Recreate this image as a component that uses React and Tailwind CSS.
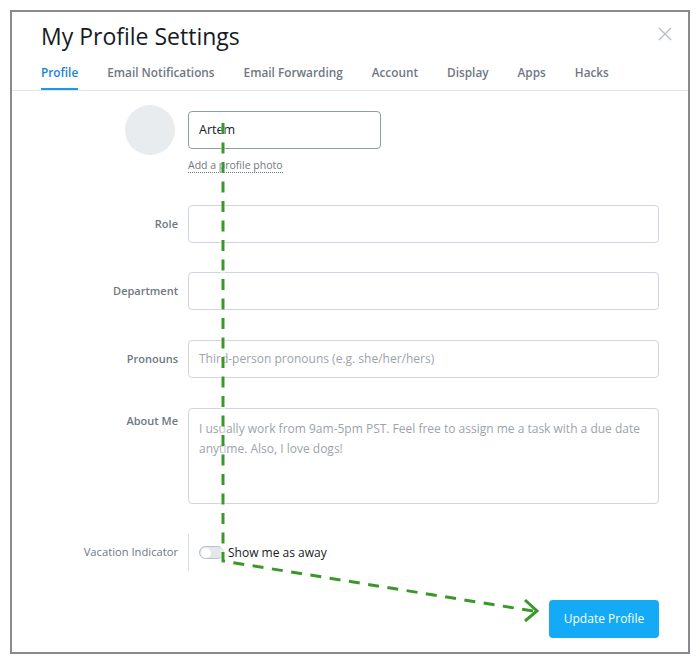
import { useState } from "react";

const tabs = [
  "Profile",
  "Email Notifications",
  "Email Forwarding",
  "Account",
  "Display",
  "Apps",
  "Hacks",
];

function FieldRow({ label, children, top = false, className = "" }) {
  return (
    <div className={`flex gap-[10px] ${top ? "items-start" : "items-center"} ${className}`}>
      <div
        className={`w-[137px] shrink-0 text-right text-[11px] font-semibold text-[#6f7782] ${
          top ? "pt-[5px]" : "pt-[1px]"
        }`}
      >
        {label}
      </div>
      <div className="flex-1">{children}</div>
    </div>
  );
}

function DashedArrow() {
  return (
    <svg
      className="absolute left-0 top-0 pointer-events-none"
      width="700"
      height="664"
      viewBox="0 0 700 664"
    >
      <path
        d="M223 123 L223 561 L533 611"
        fill="none"
        stroke="#ffffff"
        strokeOpacity="0.45"
        strokeWidth="5"
      />
      <path
        d="M223 123 L223 561 L533 611"
        fill="none"
        stroke="#3a982a"
        strokeWidth="3"
        strokeDasharray="11 8.5"
      />
      <path
        d="M525 600 L537 611 L525 621"
        fill="none"
        stroke="#3a982a"
        strokeWidth="3"
      />
    </svg>
  );
}

export default function App() {
  const [active] = useState("Profile");
  const [away, setAway] = useState(false);

  return (
    <div
      className="relative w-[700px] h-[664px] bg-white p-[10px]"
      style={{ fontFamily: "'Open Sans', 'Noto Sans', sans-serif" }}
    >
      {/* DIALOG FRAME */}
      <div className="h-[644px] border-2 border-[#878b90] bg-white">

        {/* HEADER */}
        <div className="border-b border-[#e0e5ea]">
          <div className="flex items-start justify-between pl-[29px] pr-[16px] pt-[10px]">
            <h1 className="text-[23px] leading-[28px] text-[#151b26]">My Profile Settings</h1>
            <button className="mt-[5px] text-[#b7bfc6]">
              <svg width="14" height="14" viewBox="0 0 14 14">
                <path d="M1 1 L13 13 M13 1 L1 13" stroke="currentColor" strokeWidth="1.4" />
              </svg>
            </button>
          </div>

          <div className="flex gap-[29px] pl-[29px] mt-[12px]">
            {tabs.map((tab) => (
              <span
                key={tab}
                className={`pb-[6px] border-b-2 text-[11.8px] leading-[20px] font-semibold ${
                  active === tab
                    ? "text-[#1682d9] border-[#1a9bea]"
                    : "text-[#6f7782] border-transparent"
                }`}
              >
                {tab}
              </span>
            ))}
          </div>
        </div>

        {/* FORM */}
        <div className="pl-[29px] pr-[29px] pt-[14px] flex flex-col">

          {/* AVATAR + NAME */}
          <div className="flex gap-[10px]">
            <div className="w-[137px] shrink-0 flex justify-end pr-[3px]">
              <div className="w-[50px] h-[50px] rounded-full bg-[#e8ecef]" />
            </div>
            <div className="pt-[6px]">
              <div className="w-[193px] h-[38px] rounded-[4px] border border-[#8e9ba8] px-[10px] flex items-center text-[12.5px] text-[#151b26]">
                Artem
              </div>
              <div className="mt-[8px] text-[10.5px] leading-[16px] text-[#6f7782]">
                <span className="border-b border-dotted border-[#6f7782]">Add a profile photo</span>
              </div>
            </div>
          </div>

          <FieldRow label="Role" className="mt-[32px]">
            <div className="h-[38px] rounded-[4px] border border-[#cfd6dd]" />
          </FieldRow>

          <FieldRow label="Department" className="mt-[29px]">
            <div className="h-[38px] rounded-[4px] border border-[#cfd6dd]" />
          </FieldRow>

          <FieldRow label="Pronouns" className="mt-[30px]">
            <div className="h-[38px] rounded-[4px] border border-[#cfd6dd] px-[10px] flex items-center text-[12px] text-[#9ca3ab]">
              Third-person pronouns (e.g. she/her/hers)
            </div>
          </FieldRow>

          <FieldRow label="About Me" top className="mt-[30px]">
            <div className="h-[96px] rounded-[4px] border border-[#cfd6dd] px-[10px] pt-[10px] text-[12px] leading-[20px] text-[#9ca3ab]">
              I usually work from 9am-5pm PST. Feel free to assign me a task with a due date anytime. Also, I love dogs!
            </div>
          </FieldRow>

          {/* VACATION */}
          <div className="flex items-center gap-[10px] mt-[30px]">
            <div className="w-[137px] shrink-0 text-right text-[11.2px] text-[#6f7782]">
              Vacation Indicator
            </div>
            <div className="h-[37px] border-l border-[#d9dee3] pl-[10px] flex items-center gap-[4px]">
              <button
                onClick={() => setAway(!away)}
                className="w-[25px] h-[13px] rounded-full bg-[#e3e7eb] border border-[#b8c0c8] flex items-center px-[1px]"
              >
                <span className="w-[10px] h-[10px] rounded-full bg-white" />
              </button>
              <span className="text-[12px] text-[#151b26]">Show me as away</span>
            </div>
          </div>

          {/* FOOTER */}
          <div className="flex justify-end mt-[29px]">
            <button className="w-[110px] h-[38px] rounded-[4px] bg-[#14aaf5] text-white text-[12px] font-medium">
              Update Profile
            </button>
          </div>
        </div>
      </div>

      <DashedArrow />
    </div>
  );
}
